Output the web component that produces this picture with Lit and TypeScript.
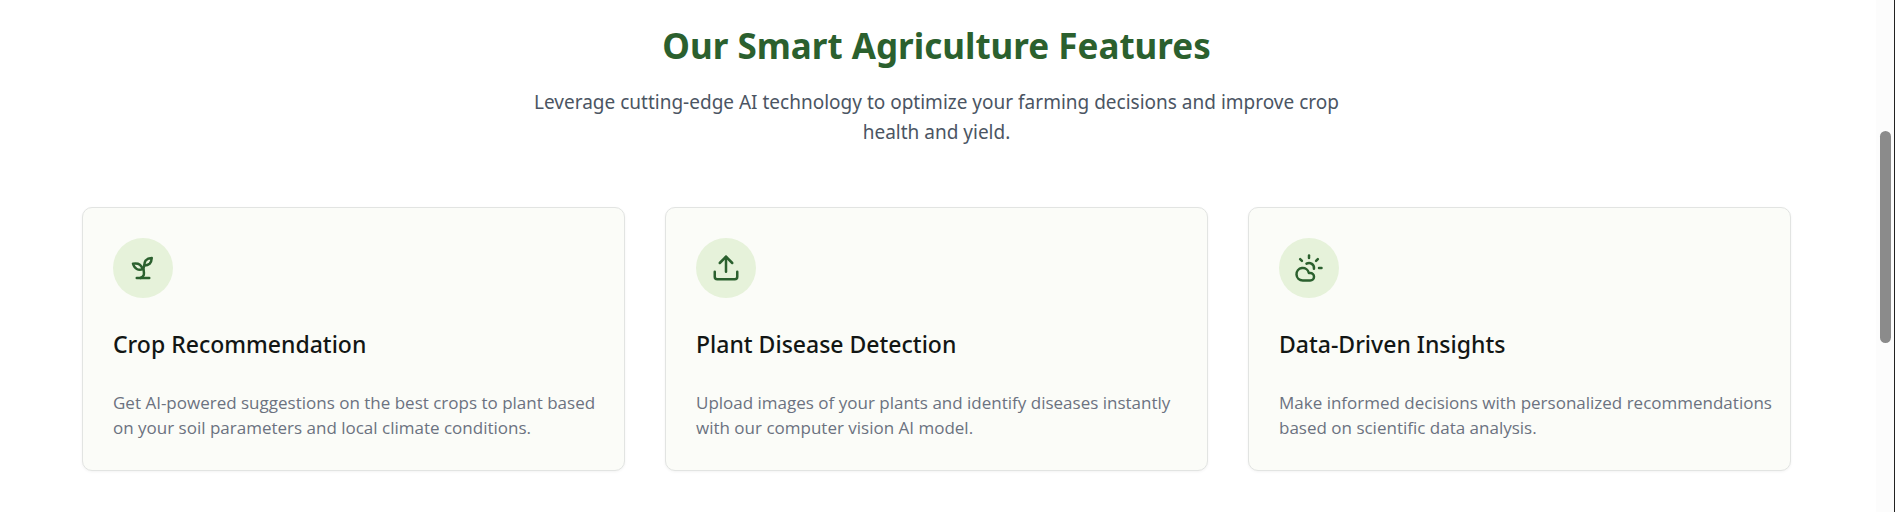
import { LitElement, html, css, svg, SVGTemplateResult } from "lit";
import { customElement, property } from "lit/decorators.js";

const icons: Record<string, SVGTemplateResult> = {
  sprout: svg`
    <path d="M7 20h10"/>
    <path d="M10 20c5.5-2.5.8-6.4 3-10"/>
    <path d="M9.5 9.4c1.1.8 1.8 2.2 2.3 3.7-2 .4-3.5.4-4.8-.3-1.2-.6-2.3-1.9-3-4.2 2.8-.5 4.4 0 5.5.8z"/>
    <path d="M14.1 6a7 7 0 0 0-1.1 4c1.9-.1 3.3-.6 4.3-1.4 1-1 1.6-2.3 1.7-4.6-2.7.1-4 1-4.9 2z"/>`,
  upload: svg`
    <path d="M21 15v4a2 2 0 0 1-2 2H5a2 2 0 0 1-2-2v-4"/>
    <path d="M17 8l-5-5-5 5"/>
    <path d="M12 3v12"/>`,
  cloudSun: svg`
    <path d="M12 2v2"/>
    <path d="m4.93 4.93 1.41 1.41"/>
    <path d="M20 12h2"/>
    <path d="m19.07 4.93-1.41 1.41"/>
    <path d="M15.947 12.65a4 4 0 0 0-5.925-4.128"/>
    <path d="M13 22H7a5 5 0 1 1 4.9-6H13a3 3 0 0 1 0 6Z"/>`,
};

const features = [
  {
    icon: "sprout",
    title: "Crop Recommendation",
    text: "Get AI-powered suggestions on the best crops to plant based on your soil parameters and local climate conditions.",
  },
  {
    icon: "upload",
    title: "Plant Disease Detection",
    text: "Upload images of your plants and identify diseases instantly with our computer vision AI model.",
  },
  {
    icon: "cloudSun",
    title: "Data-Driven Insights",
    text: "Make informed decisions with personalized recommendations based on scientific data analysis.",
  },
];

@customElement("feature-card")
export class FeatureCard extends LitElement {
  @property() icon = "";
  @property() heading = "";
  @property() text = "";

  static styles = css`
    :host {
      display: block;
    }
    .card {
      box-sizing: border-box;
      height: 100%;
      padding: 30px 16px 30px 30px;
      border: 1px solid #e2e4e2;
      border-radius: 10px;
      background: #fbfcf8;
      box-shadow: 0 1px 3px rgba(0, 0, 0, 0.05);
    }
    .badge {
      display: grid;
      place-items: center;
      width: 60px;
      height: 60px;
      border-radius: 50%;
      background: #e6f2da;
      color: #2b602e;
    }
    .icon {
      width: 30px;
      height: 30px;
      fill: none;
      stroke: currentColor;
      stroke-width: 2;
      stroke-linecap: round;
      stroke-linejoin: round;
    }
    .title {
      margin: 30px 0;
      font-size: 23px;
      line-height: 32px;
      font-weight: 500;
      color: #121614;
    }
    .text {
      margin: 0;
      font-family: "Open Sans", "Noto Sans", sans-serif;
      font-size: 17px;
      line-height: 25px;
      color: #6b7280;
    }
  `;

  render() {
    return html`
      <article class="card">
        <div class="badge">
          <svg class="icon" viewBox="0 0 24 24" aria-hidden="true">${icons[this.icon]}</svg>
        </div>
        <h3 class="title">${this.heading}</h3>
        <p class="text">${this.text}</p>
      </article>
    `;
  }
}

@customElement("app-root")
export class AppRoot extends LitElement {
  static styles = css`
    :host {
      display: flex;
      min-height: 100vh;
      background: #fff;
      font-family: "Noto Sans", "Open Sans", sans-serif;
    }
    .section {
      flex: 1;
      padding: 21px 85px 40px 82px;
    }
    .intro {
      display: flex;
      flex-direction: column;
      align-items: center;
      gap: 16px;
      margin-bottom: 60px;
      text-align: center;
    }
    .heading {
      margin: 0;
      font-size: 35px;
      line-height: 50px;
      font-weight: 700;
      color: #2b602e;
    }
    .lead {
      max-width: 840px;
      margin: 0;
      font-size: 19px;
      line-height: 30px;
      color: #4b5563;
    }
    .grid {
      display: grid;
      grid-template-columns: repeat(3, 1fr);
      gap: 40px;
    }
    .track {
      box-sizing: border-box;
      width: 19px;
      padding: 131px 3px 0 4px;
      border-right: 1px solid #222;
      background: #fcfcfc;
    }
    .thumb {
      height: 212px;
      border-radius: 6px;
      background: #8b8b8b;
    }
  `;

  render() {
    return html`
      <section class="section">
        <header class="intro">
          <h2 class="heading">Our Smart Agriculture Features</h2>
          <p class="lead">
            Leverage cutting-edge AI technology to optimize your farming decisions and improve crop
            health and yield.
          </p>
        </header>
        <div class="grid">
          ${features.map(
            (f) => html`<feature-card .icon=${f.icon} .heading=${f.title} .text=${f.text}></feature-card>`
          )}
        </div>
      </section>
      <div class="track" aria-hidden="true"><div class="thumb"></div></div>
    `;
  }
}
